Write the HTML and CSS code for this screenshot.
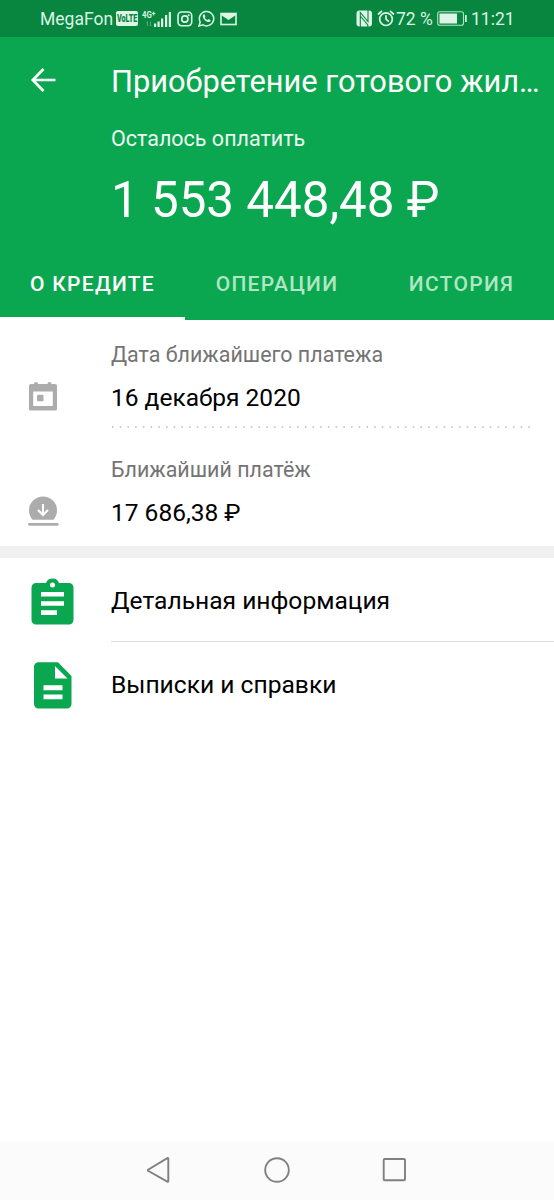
FILE: index.html
```html
<!DOCTYPE html>
<html lang="ru">
<head>
<meta charset="utf-8">
<title>Приобретение готового жилья</title>
<link rel="stylesheet" href="styles.css">
</head>
<body>
<div class="screen">
  <header class="header">
    <div class="status">
      <div class="status-left">
        <span class="carrier">MegaFon</span>
        <span class="volte"><span>VoLTE</span></span>
        <span class="signal">
          <span class="network">4G<sup>+</sup></span>
          <svg width="30" height="18" viewBox="0 0 30 18"><g fill="#dcf5e4"><path d="M12 13.500h2.200v3.500H12zM15.500 11.500h2.200V17h-2.200zM19 8.500h2.200V17H19zM23 5h2.200v12H23zM26.800 2H29v15h-2.200z"/></g><path d="M5.500 16v-4.500l-1 1M8.500 11.500v4.500l1-1" fill="none" stroke="#54b17c"/></svg>
        </span>
        <svg class="insta" width="16" height="16" viewBox="0 0 16 16"><g fill="none" stroke="#dcf5e4" stroke-width="1.600"><rect x="1" y="1" width="13.700" height="13.700" rx="3.600"/><circle cx="7.850" cy="8" r="3.100"/></g><circle cx="11.700" cy="4.200" r="1" fill="#dcf5e4"/></svg>
        <svg class="whatsapp" width="17" height="17" viewBox="0 0 17 17"><path d="M1 16l1.200-4A7.200 7.200 0 1 1 5 14.900z" fill="none" stroke="#dcf5e4" stroke-width="1.500"/><path d="M5.500 4.500c.5-.5 1-.4 1.300.2l.6 1.500c.1.500-.5.800-.7 1.200.7 1.300 1.700 2.100 2.900 2.600.5-.2.700-.9 1.200-.8l1.700.9c.3.800-.4 1.800-1.400 2-2.600.2-6.300-3.100-6.300-5.800 0-.8.300-1.400.7-1.800z" fill="#dcf5e4"/></svg>
        <svg class="mail" width="17" height="14" viewBox="0 0 17 14"><rect x="1" y="1.500" width="15" height="11" fill="none" stroke="#dcf5e4" stroke-width="1.600"/><path d="M1 1h15v2L8.500 8 1 3z" fill="#dcf5e4"/></svg>
      </div>
      <div class="status-right">
        <svg class="nfc" width="17" height="17" viewBox="0 0 17 17"><rect x=".5" y=".5" width="15.500" height="16" rx="3" fill="#dcf5e4"/><path d="M4.300 17V2.500l7.700 9V0M4.300 6l7.500 9V17" fill="none" stroke="#088640" stroke-width="1.100"/></svg>
        <svg class="alarm" width="18" height="17" viewBox="0 0 18 17"><g fill="none" stroke="#dcf5e4" stroke-width="1.700" stroke-linecap="round"><circle cx="9" cy="9.200" r="6.300"/><path d="M9 5.800v3.400l2.300 2M1.500 4l3-2.700M13.500 1.300l3 2.700"/></g></svg>
        <span class="percent">72 %</span>
        <svg class="battery" width="31" height="15" viewBox="0 0 31 15"><rect x=".7" y=".7" width="25.800" height="13.600" rx="2" fill="none" stroke="#b1e2c3" stroke-width="1.100"/><path d="M2.500 2.500H20v10H2.500zM28 4h1.700v7H28z" fill="#dcf5e4"/></svg>
        <span class="clock">11:21</span>
      </div>
    </div>
    <div class="appbar">
      <svg class="back" width="28" height="26" viewBox="0 0 28 26"><path d="M27.500 12H5M15.500 1 4.800 12l10.700 11" fill="none" stroke="#fff" stroke-width="2.700"/></svg>
      <h1 class="title">Приобретение готового жил…</h1>
    </div>
    <div class="caption">Осталось оплатить</div>
    <div class="amount">1 553 448,48 ₽</div>
    <nav class="tabs">
      <a class="tab tab-active">О КРЕДИТЕ</a>
      <a class="tab">ОПЕРАЦИИ</a>
      <a class="tab">ИСТОРИЯ</a>
    </nav>
  </header>
  <main class="content">
    <section class="row row-date">
      <svg class="row-icon" width="34" height="34" viewBox="0 0 34 34"><path d="M4 4h3a2 2 0 0 1 4 0h9.500a2 2 0 0 1 4 0H28a2 2 0 0 1 2 2v23a1.500 1.500 0 0 1-1.500 1.500h-25A1.500 1.500 0 0 1 2 29V6a2 2 0 0 1 2-2zm2.200 7.500v14.500h19.600V11.500z" transform="translate(-1 0)" fill="#acacac" fill-rule="evenodd"/><rect x="9" y="14.700" width="6.500" height="6.500" rx="1" fill="#acacac"/></svg>
      <div class="label">Дата ближайшего платежа</div>
      <div class="value">16 декабря 2020</div>
      <svg class="dots" width="421" height="3" viewBox="0 0 421 3"><path d="M1 1h419" stroke="#bdbdbd" stroke-width="1.600" stroke-dasharray="1.600 6.110"/></svg>
    </section>
    <section class="row row-payment">
      <svg class="row-icon" width="34" height="34" viewBox="0 0 34 34"><path d="M4.500 24.700a14 14 0 1 1 21 0z" fill="#acacac"/><path d="M15 9v10.500M10 15l5 5 5-5" fill="none" stroke="#fff" stroke-width="2.100"/><path d="M1.400 29.300h27.800" stroke="#acacac" stroke-width="2.800" stroke-linecap="round"/></svg>
      <div class="label">Ближайший платёж</div>
      <div class="value">17 686,38 ₽</div>
    </section>
    <div class="band"></div>
    <a class="item">
      <svg width="43" height="47" viewBox="0 0 43 47"><g transform="translate(.5 0)"><path d="M4.500 5h10a7 7 0 0 1 13 0h10A4.500 4.500 0 0 1 42 9.500v32.500a4.500 4.500 0 0 1-4.500 4.500h-33A4.500 4.500 0 0 1 0 42V9.500A4.500 4.500 0 0 1 4.500 5z" fill="#0ba750"/><circle cx="21" cy="7" r="2.500" fill="#fff"/><path d="M9.500 14h23v4.500h-23zM9.500 23.200h23v4.500h-23zM9.500 32.300h16V37h-16z" fill="#fff"/></g></svg>
      <span>Детальная информация</span>
    </a>
    <a class="item item-last">
      <svg width="43" height="47" viewBox="0 0 43 47"><g transform="translate(.5 0)"><path d="M7 .2h19.500L40 14v28a4.500 4.500 0 0 1-4.500 4.500H7A4.500 4.500 0 0 1 2.500 42V4.700A4.500 4.500 0 0 1 7 .2z" fill="#0ba750"/><path d="M23.500 4v12.500h12.500zM12 23.200h19v5H12zM12 32.500h19v4.700H12z" fill="#fff"/></g></svg>
      <span>Выписки и справки</span>
    </a>
  </main>
  <footer class="navbar">
    <svg width="26" height="28" viewBox="0 0 26 28"><path d="M21.300 2.700v22.400q0 1-1 .5L1.500 15q-1.200-.7 0-1.500L20.300 2.200q1-.5 1 .5z" fill="none" stroke="#808080" stroke-width="1.900"/></svg>
    <svg width="28" height="28" viewBox="0 0 28 28"><circle cx="14" cy="14" r="11.800" fill="none" stroke="#808080" stroke-width="1.900"/></svg>
    <svg width="26" height="26" viewBox="0 0 26 26"><rect x="2.700" y="2" width="21.300" height="21.300" rx="1" fill="none" stroke="#808080" stroke-width="1.900"/></svg>
  </footer>
</div>
</body>
</html>
```
FILE: styles.css
```css
* { box-sizing: border-box; }
body { margin: 0; font-family: Roboto, "Noto Sans", sans-serif; background: #fff; }
svg { display: block; flex: none; }
.screen { width: 554px; height: 1200px; display: flex; flex-direction: column; overflow: hidden; white-space: nowrap; }
.header { height: 320px; background: #0ba750; color: #fff; flex: none; }
.status { height: 37px; background: #088640; color: #dcf5e4; display: flex; justify-content: space-between; padding: 0 40px; font-size: 17.5px; line-height: 38px; }
.status-left, .status-right { display: flex; align-items: center; }
.carrier { width: 76px; }
.volte { width: 22px; height: 15px; border-radius: 2px; background: #dcf5e4; color: #088640; font-size: 10px; font-weight: 900; line-height: 15px; display: flex; justify-content: center; }
.volte span { transform: scaleX(.72); }
.signal { display: grid; width: 30px; height: 18px; margin-left: 4px; }
.signal > * { grid-area: 1 / 1; }
.network { font-size: 9.5px; font-weight: 700; line-height: 9px; transform: scaleX(.82); transform-origin: left; }
.network sup { font-size: 8px; line-height: 0; vertical-align: 2px; }
.insta { margin-left: 5px; }
.whatsapp { margin-left: 5px; }
.mail { margin-left: 5px; }
.alarm { margin-left: 4px; }
.percent { width: 41px; margin-left: 1px; }
.battery { margin-right: 3px; }
.clock { width: 43px; }
.appbar { height: 88px; display: flex; align-items: center; padding-left: 28px; }
.title { margin: 1px 0 0 55px; font-size: 30.8px; font-weight: 400; line-height: 36px; }
.caption { margin-left: 111px; height: 28px; line-height: 27px; font-size: 21.5px; opacity: .92; }
.amount { margin-left: 111px; margin-top: 17px; height: 60px; line-height: 61px; font-size: 49.3px; }
.tabs { height: 90px; display: grid; grid-template-columns: 185px 184px 185px; padding-top: 36px; }
.tab { display: flex; justify-content: center; font-size: 21px; font-weight: 500; letter-spacing: 1.3px; line-height: 36px; color: #b0e6c3; height: 54px; }
.tab-active { color: #fff; border-bottom: 3px solid #fff; }
.content { flex: 1; color: #000; }
.row { display: grid; grid-template-columns: 83px 1fr; padding-left: 28px; }
.row-date { height: 115px; padding-top: 20px; grid-template-rows: 28px 58px 9px; }
.row-payment { height: 111px; padding-top: 20px; grid-template-rows: 28px 58px; }
.row-icon { grid-row: 2; grid-column: 1; align-self: center; }
.label, .value, .dots { grid-column: 2; }
.label { grid-row: 1; line-height: 29px; font-size: 21.45px; color: #747474; }
.value { grid-row: 2; line-height: 59px; font-size: 24.5px; }
.dots { grid-row: 3; }
.band { height: 12px; background: #f0f0f0; }
.item { display: flex; align-items: center; height: 84px; padding: 1px 0 0 31px; font-size: 24.6px; }
.item svg { margin-top: 2px; }
.item span { flex: 1; margin-left: 37px; height: 83px; line-height: 84px; border-bottom: 1px solid #dcdcdc; }
.item-last span { border-bottom: 0; }
.navbar { height: 58px; background: #fbfbfb; display: flex; justify-content: space-between; align-items: center; padding: 0 147px 2px; }
```
